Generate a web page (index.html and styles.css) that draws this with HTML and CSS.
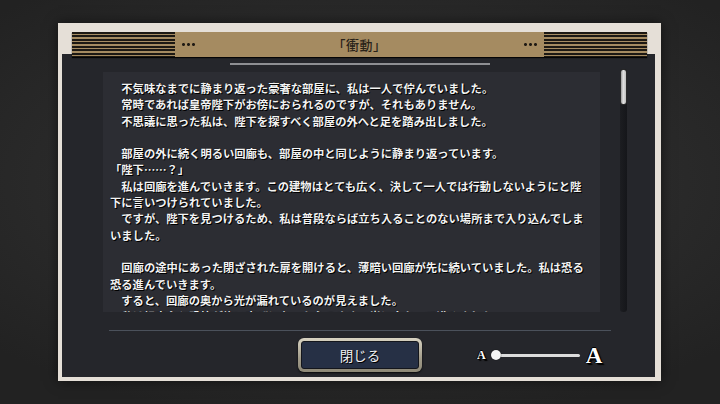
FILE: index.html
```html
<!DOCTYPE html>
<html lang="ja">
<head>
<meta charset="utf-8">
<title>衝動</title>
<link rel="stylesheet" href="styles.css">
</head>
<body>
<div class="frame">
  <div class="header">
    <div class="stripes"></div>
    <span class="dots"></span>
    <div class="title">「衝動」</div>
    <span class="dots"></span>
    <div class="stripes"></div>
  </div>
  <div class="panel">
    <div class="topline"></div>
    <div class="main">
      <div class="textbox">
        <p class="ind">不気味なまでに静まり返った豪奢な部屋に、私は一人で佇んでいました。</p>
        <p class="ind">常時であれば皇帝陛下がお傍におられるのですが、それもありません。</p>
        <p class="ind gap">不思議に思った私は、陛下を探すべく部屋の外へと足を踏み出しました。</p>
        <p class="ind">部屋の外に続く明るい回廊も、部屋の中と同じように静まり返っています。</p>
        <p>「陛下……？」</p>
        <p class="ind">私は回廊を進んでいきます。この建物はとても広く、決して一人では行動しないようにと陛下に言いつけられていました。</p>
        <p class="ind gap">ですが、陛下を見つけるため、私は普段ならば立ち入ることのない場所まで入り込んでしまいました。</p>
        <p class="ind">回廊の途中にあった閉ざされた扉を開けると、薄暗い回廊が先に続いていました。私は恐る恐る進んでいきます。</p>
        <p class="ind">すると、回廊の奥から光が漏れているのが見えました。</p>
        <p class="ind">私は好奇心と恐怖が綯い交ぜになった心のまま、光に向かって進みました。</p>
      </div>
      <div class="scroll"><div class="thumb"></div></div>
    </div>
    <div class="divider"></div>
    <div class="footer">
      <div class="btn"><div class="btn-in">閉じる</div></div>
      <div class="fontsize">
        <span class="a-small">A</span>
        <span class="knob"></span>
        <span class="line"></span>
        <span class="a-big">A</span>
      </div>
    </div>
  </div>
</div>
</body>
</html>
```
FILE: styles.css
```css
html, body {
  margin: 0;
  padding: 0;
}
body {
  width: 720px;
  height: 404px;
  overflow: hidden;
  background: radial-gradient(ellipse 70% 60% at 50% 45%, #303030 0%, #2a2a2a 60%, #222 100%);
  font-family: "Noto Sans CJK JP", "Liberation Serif", serif;
}
.frame {
  margin: 23px 0 0 58px;
  width: 603px;
  height: 358px;
  box-sizing: border-box;
  padding: 9px 6px 4px 4px;
  background: #e5dfd7;
  box-shadow: 0 0 12px rgba(0,0,0,0.55);
  display: flex;
  flex-direction: column;
}
.header {
  position: relative;
  z-index: 1;
  margin: 0 8px 0 10px;
  height: 25px;
  display: flex;
  align-items: center;
  background: #a58b61;
  box-shadow: 0 1px 1px rgba(0,0,0,0.85);
}
.stripes {
  width: 103px;
  height: 25px;
  background: repeating-linear-gradient(to bottom, #1c1813 0 2px, #a58b61 2px 3.5px);
}
.dots {
  width: 15px;
  height: 5px;
  margin: 0 6px;
  background: radial-gradient(circle, #1f1a14 1.2px, transparent 1.7px) 0 0 / 5px 5px repeat-x;
}
.title {
  flex: 1;
  text-align: center;
  font-size: 13px;
  font-weight: 500;
  color: #2a2319;
  letter-spacing: 0.5px;
}
.panel {
  margin-top: -3px;
  flex: 1;
  background: #25262b;
  display: flex;
  flex-direction: column;
  padding-top: 9px;
}
.topline {
  margin-left: 168px;
  width: 260px;
  height: 2px;
  background: #8e8f93;
}
.main {
  display: flex;
  align-items: flex-start;
  margin-top: 7px;
  padding-left: 41px;
}
.textbox {
  width: 497px;
  height: 240px;
  box-sizing: border-box;
  padding: 8px 0 0 7px;
  background: #2c2d33;
  overflow: hidden;
}
.textbox p {
  margin: 0;
  width: 480px;
  font-size: 11.3px;
  line-height: 16.3px;
  font-weight: 700;
  color: #f3f3f3;
  text-shadow: 1px 1px 0 #000, 0 0 1px #000;
}
.textbox p.ind {
  text-indent: 1em;
}
.textbox p.gap {
  margin-bottom: 16.3px;
}
.scroll {
  margin: -3px 0 0 20px;
  width: 7px;
  height: 243px;
  background: linear-gradient(to right, #1c1d21, #15161a);
  border-radius: 3px;
}
.thumb {
  width: 7px;
  height: 36px;
  box-sizing: border-box;
  border: 1px solid #2a2a2a;
  border-radius: 3px;
  background: linear-gradient(to right, #9a9a9a, #e2e2e2 45%, #bdbdbd);
}
.divider {
  margin: 18px 0 0 47px;
  width: 502px;
  height: 1px;
  background: #4b515b;
}
.footer {
  display: flex;
  align-items: center;
  margin-top: 7px;
}
.btn {
  margin-left: 236px;
  width: 124px;
  height: 34px;
  box-sizing: border-box;
  padding: 3px;
  border-radius: 6px;
  background: linear-gradient(to bottom, #d8d3c2, #a29c8a 60%, #8d8876);
  box-shadow: 0 1px 2px rgba(0,0,0,0.8);
}
.btn-in {
  height: 100%;
  box-sizing: border-box;
  border: 1px solid #14161c;
  border-radius: 3px;
  background: #263045;
  color: #f2f2f2;
  font-size: 13.5px;
  display: flex;
  align-items: center;
  justify-content: center;
  text-shadow: 1px 1px 0 #000;
}
.fontsize {
  display: flex;
  align-items: center;
  margin-left: 55px;
}
.a-small, .a-big {
  font-family: "Liberation Serif", serif;
  font-weight: 700;
  color: #fff;
  text-shadow: 1px 1px 0 #000, -1px 0 0 #000, 0 -1px 0 #000, 2px 2px 1px #000;
  line-height: 1;
}
.a-small {
  font-size: 12px;
}
.knob {
  position: relative;
  z-index: 1;
  margin-left: 5px;
  width: 10px;
  height: 10px;
  border-radius: 50%;
  background: #f4f4f4;
  box-shadow: 0 0 1px #000;
}
.line {
  margin-left: -5px;
  width: 84px;
  height: 3px;
  border-radius: 2px;
  background: #dcdcdc;
}
.a-big {
  margin-left: 6px;
  font-size: 23px;
}
```
